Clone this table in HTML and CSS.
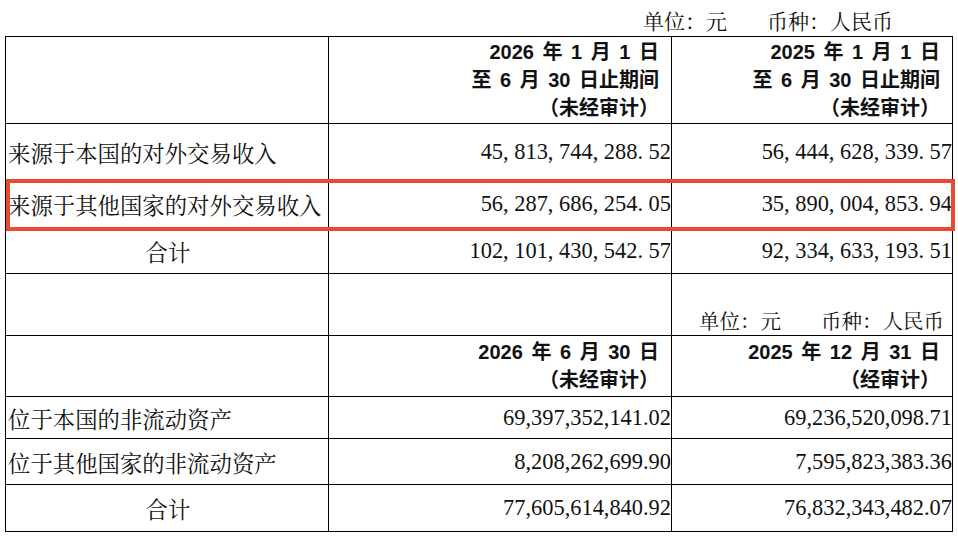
FILE: index.html
```html
<!DOCTYPE html>
<html lang="zh-CN">
<head>
<meta charset="utf-8">
<title>地区信息</title>
<link rel="stylesheet" href="styles.css">
</head>
<body>
<div class="page">
  <div class="caption top-caption">单位：元<span class="gap"></span>币种：人民币</div>
  <table class="report">
    <colgroup>
      <col class="c1">
      <col class="c2">
      <col class="c3">
    </colgroup>
    <tr class="head1">
      <td></td>
      <td class="hd">2026 年 1 月 1 日<br>至 6 月 30 日止期间<br>（未经审计）</td>
      <td class="hd">2025 年 1 月 1 日<br>至 6 月 30 日止期间<br>（未经审计）</td>
    </tr>
    <tr class="r1">
      <td class="label">来源于本国的对外交易收入</td>
      <td class="num wide">45, 813, 744, 288. 52</td>
      <td class="num wide">56, 444, 628, 339. 57</td>
    </tr>
    <tr class="r2">
      <td class="label">来源于其他国家的对外交易收入</td>
      <td class="num wide">56, 287, 686, 254. 05</td>
      <td class="num wide">35, 890, 004, 853. 94</td>
    </tr>
    <tr class="r3">
      <td class="label total">合计</td>
      <td class="num wide">102, 101, 430, 542. 57</td>
      <td class="num wide">92, 334, 633, 193. 51</td>
    </tr>
    <tr class="blank">
      <td></td>
      <td></td>
      <td class="caption inner-caption">单位：元<span class="gap"></span>币种：人民币</td>
    </tr>
    <tr class="head2">
      <td></td>
      <td class="hd">2026 年 6 月 30 日<br>（未经审计）</td>
      <td class="hd">2025 年 12 月 31 日<br>（经审计）</td>
    </tr>
    <tr class="s1">
      <td class="label">位于本国的非流动资产</td>
      <td class="num">69,397,352,141.02</td>
      <td class="num">69,236,520,098.71</td>
    </tr>
    <tr class="s2">
      <td class="label">位于其他国家的非流动资产</td>
      <td class="num">8,208,262,699.90</td>
      <td class="num">7,595,823,383.36</td>
    </tr>
    <tr class="s3">
      <td class="label total">合计</td>
      <td class="num">77,605,614,840.92</td>
      <td class="num">76,832,343,482.07</td>
    </tr>
  </table>
  <div class="highlight"></div>
</div>
</body>
</html>
```

FILE: styles.css
```css
html, body {
  margin: 0;
  padding: 0;
  background: #ffffff;
}

.page {
  position: relative;
  width: 958px;
  height: 542px;
  padding: 0 0 0 5px;
  box-sizing: border-box;
  color: #111111;
  font-family: "Noto Serif CJK SC", "Noto Sans CJK SC", serif;
}

.caption {
  font-family: "Noto Serif CJK SC", "Noto Sans CJK SC", serif;
  font-size: 21px;
  line-height: 24px;
  white-space: nowrap;
}

.gap {
  display: inline-block;
  width: 40px;
}

.top-caption {
  height: 36px;
  box-sizing: border-box;
  padding: 8px 0 0 638px;
}

.report {
  border-collapse: collapse;
  table-layout: fixed;
  width: 947px;
}

.c1 { width: 323px; }
.c2 { width: 343px; }
.c3 { width: 281px; }

.report td {
  border: 1px solid #000000;
  padding: 0 0 0 2px;
  vertical-align: middle;
  white-space: nowrap;
}

.hd {
  font-family: "Liberation Sans", "Noto Sans CJK SC", sans-serif;
  font-weight: 700;
  font-size: 20px;
  line-height: 28px;
  text-align: right;
  word-spacing: 3px;
  padding-right: 12px !important;
}

.head1 td { height: 86px; }
.r1 td { height: 55px; }
.r2 td { height: 48px; }
.r3 td { height: 44px; }
.blank td { height: 58px; }
.head2 td { height: 60px; }
.s1 td { height: 41px; }
.s2 td { height: 45px; }
.s3 td { height: 46px; }

.label {
  font-family: "Noto Serif CJK SC", "Noto Sans CJK SC", serif;
  font-size: 22.4px;
  line-height: 28px;
  text-align: left;
}

.label.total {
  text-align: center;
}

.num {
  font-family: "Liberation Serif", "Times New Roman", serif;
  font-size: 22.4px;
  line-height: 28px;
  text-align: right;
  padding: 0 !important;
}

.inner-caption {
  vertical-align: bottom !important;
  text-align: right;
  padding: 0 8px 3px 0 !important;
  font-size: 20.5px;
}

.highlight {
  position: absolute;
  left: 6px;
  top: 179px;
  width: 949px;
  height: 52px;
  box-sizing: border-box;
  border: 4px solid #ea4a32;
}
```
